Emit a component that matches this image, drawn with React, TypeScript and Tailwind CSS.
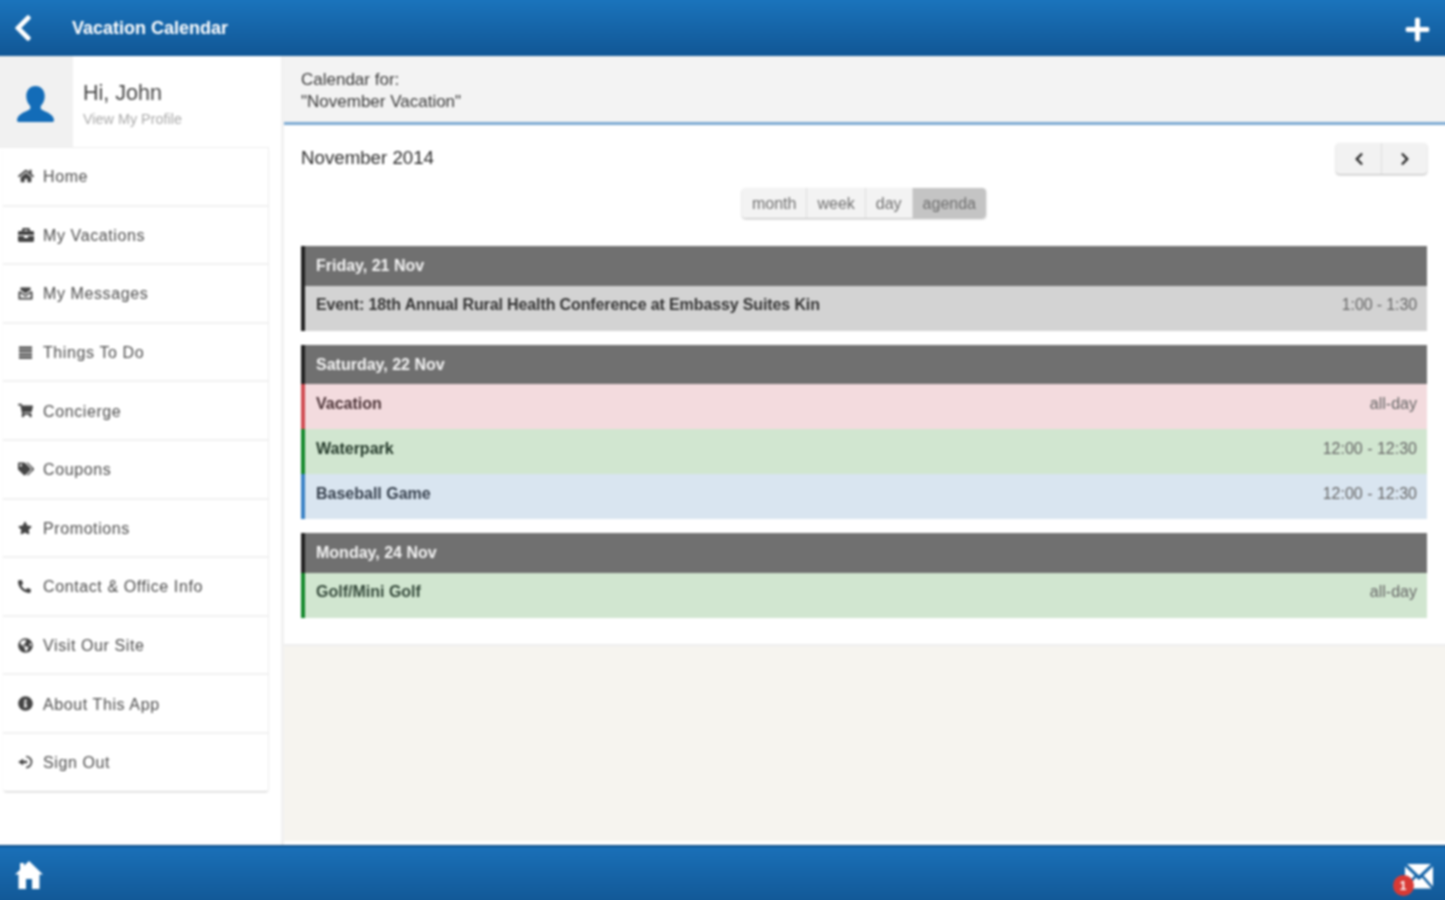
import type { ReactNode } from "react";
import { FaBriefcase, FaChevronLeft, FaChevronRight, FaGlobeAmericas, FaHome, FaInfoCircle, FaPhone, FaPlus, FaShoppingCart, FaStar, FaTags } from "react-icons/fa";

function ListIcon() {
  return (
    <svg viewBox="0 0 16 16" className="h-[15px] w-[15px] fill-[#444]">
      <path d="M1 1.500h14v2.400H1zM1 5.100h14v2.400H1zM1 8.700h14v2.400H1zM1 12.300h14v2.400H1z" />
    </svg>
  );
}

function InboxIcon() {
  return (
    <svg viewBox="0 0 16 16" className="h-[15px] w-[15px] fill-none stroke-[#444]">
      <path d="M1.500 6v7.500h13V6" strokeWidth="2" />
      <path d="M3 2h10v1.800L8 7.500 3 3.800z" fill="#444" strokeWidth="1" />
      <path d="M1.500 6 8 10.500 14.500 6" strokeWidth="1.600" />
    </svg>
  );
}

function SignOutIcon() {
  return (
    <svg viewBox="0 0 16 16" className="h-[16px] w-[16px] fill-[#444] stroke-[#444]">
      <path d="M8 2.500a5.500 5.500 0 1 1 0 11" fill="none" strokeWidth="1.700" />
      <path d="M0.500 8 5 5v2h4v2H5v2z" strokeWidth="0.400" />
    </svg>
  );
}

function PersonIcon() {
  return (
    <svg viewBox="0 0 38 38" className="h-[37px] w-[37px] fill-[#136cb8]">
      <path d="M19 0c6 0 9.500 4.500 9.500 10.500 0 4.200-2 8-4.100 10v3.200c2.500 2.400 13.200 4.300 13.600 11.300 0 1.200-.6 2-1.600 2H1.600C.6 37 0 36.200 0 35c.4-7 11.100-8.900 13.600-11.300v-3.200c-2.100-2-4.100-5.800-4.100-10C9.500 4.500 13 0 19 0z" />
    </svg>
  );
}

function HouseIcon() {
  return (
    <svg viewBox="0 0 28 28" className="h-[28px] w-[28px] fill-white">
      <path d="M14 0 28 13.500h-3.500V28H17V18h-6v10H3.500V13.500H0L5 8.700V2h4v2.800z" />
    </svg>
  );
}

function MailIcon() {
  return (
    <svg viewBox="0 0 28 26" className="h-[26px] w-[28px]">
      <path d="M2 1h24L14 12.500z" fill="#fff" />
      <path d="M0 3.500v20l9.500-11zM28 3.500v20l-9.500-11z" fill="#fff" />
      <path d="M1.500 25.500 11 14.500l3 2.500 3-2.500 9.500 11z" fill="#fff" />
    </svg>
  );
}

const menu: { label: string; icon: ReactNode }[] = [
  { label: "Home", icon: <FaHome size={16} /> },
  { label: "My Vacations", icon: <FaBriefcase size={16} /> },
  { label: "My Messages", icon: <InboxIcon /> },
  { label: "Things To Do", icon: <ListIcon /> },
  { label: "Concierge", icon: <FaShoppingCart size={15} /> },
  { label: "Coupons", icon: <FaTags size={16} /> },
  { label: "Promotions", icon: <FaStar size={14} /> },
  { label: "Contact & Office Info", icon: <FaPhone size={13} className="-scale-x-100" /> },
  { label: "Visit Our Site", icon: <FaGlobeAmericas size={15} /> },
  { label: "About This App", icon: <FaInfoCircle size={15} /> },
  { label: "Sign Out", icon: <SignOutIcon /> },
];

const agenda = [
  {
    day: "Friday, 21 Nov",
    events: [{ title: "Event: 18th Annual Rural Health Conference at Embassy Suites Kin", time: "1:00 - 1:30", bg: "bg-[#d3d3d3]", edge: "border-l-[#222222]", text: "text-[#333333] tracking-[-0.12px]" }],
  },
  {
    day: "Saturday, 22 Nov",
    events: [
      { title: "Vacation", time: "all-day", bg: "bg-[#f3dbde]", edge: "border-l-[#cf4a50]", text: "text-[#4a3236]" },
      { title: "Waterpark", time: "12:00 - 12:30", bg: "bg-[#d1e6d0]", edge: "border-l-[#13882b]", text: "text-[#24392a]" },
      { title: "Baseball Game", time: "12:00 - 12:30", bg: "bg-[#d9e5f0]", edge: "border-l-[#3b82c4]", text: "text-[#333d4a]" },
    ],
  },
  {
    day: "Monday, 24 Nov",
    events: [{ title: "Golf/Mini Golf", time: "all-day", bg: "bg-[#d1e6d0]", edge: "border-l-[#13882b]", text: "text-[#34483a]" }],
  },
];

const views = ["month", "week", "day", "agenda"];

export default function App() {
  return (
    <div className="h-[900px] w-[1445px] overflow-hidden">
      {/* 3px bleed on every side so the soft filter does not fade at the window edge */}
      <div className="-m-[3px] flex h-[906px] w-[1451px] flex-col bg-white font-['Liberation_Sans',Arial,sans-serif] text-[#333] blur-[0.8px]">
        <header className="flex h-[59px] shrink-0 items-center justify-between bg-gradient-to-b from-[#1b75be] to-[#115795] pl-[11px] pr-[17px] pt-[3px] shadow-[0_1px_1px_rgba(0,0,0,0.3)]">
          <div className="flex items-center">
            <FaChevronLeft size={30} className="text-white" />
            <h1 className="ml-[34px] text-[18px] font-bold text-white">Vacation Calendar</h1>
          </div>
          <FaPlus size={27} className="mt-[3px] text-white" />
        </header>

        <div className="flex min-h-0 flex-1">
          <aside className="w-[287px] shrink-0 border-r-[3px] border-r-[#f1f1f1] bg-white pr-[12px] pl-[6px]">
            <div className="-ml-[6px] flex h-[92px] border-b border-b-[#eeeeee]">
              <div className="flex w-[76px] items-center justify-center bg-[#f1f1f1] pl-[1px] pt-[5px]">
                <PersonIcon />
              </div>
              <div className="pl-[10px] pt-[24.500px]">
                <div className="text-[21.500px] leading-[25px] text-[#444]">Hi, John</div>
                <div className="mt-[5.500px] text-[14.400px] leading-[16px] text-[#aaaaaa]">View My Profile</div>
              </div>
            </div>
            <nav className="rounded-b-[3px] border-r border-r-[#eeeeee] shadow-[0_2px_2px_-1px_rgba(0,0,0,0.22)]">
              {menu.map((item) => (
                <div key={item.label} className="flex h-[58.600px] items-center border-b-2 border-b-[#f1f1f1] pl-[15px] pt-[2px] last:h-[57px] last:border-b-0">
                  <span className="-mt-[2px] flex w-[25px] shrink-0 items-center text-[#444]">{item.icon}</span>
                  <span className="text-[16px] tracking-[0.6px] text-[#4d4d4d]">{item.label}</span>
                </div>
              ))}
            </nav>
          </aside>

          <main className="flex min-w-0 flex-1 flex-col border-b-[4px] border-b-white bg-[#f6f4ef]">
            <div className="h-[69px] shrink-0 border-b-[3px] border-b-[#7eabd3] bg-[#f3f3f3] pl-[17px] pt-[13px] text-[17px] leading-[22px] text-[#3a3a3a]">
              <div>Calendar for:</div>
              <div>"November Vacation"</div>
            </div>

            <section className="h-[521px] shrink-0 border-b-2 border-b-[#eeeeee] bg-white pl-[17px] pr-[21px] pt-[21px]">
              <div className="flex items-start justify-between">
                <h2 className="text-[18.700px] leading-[24px] text-[#2b2b2b]">November 2014</h2>
                <div className="mt-[-3px] flex h-[31px] w-[91px] rounded-[4px] bg-[#f2f2f2] shadow-[0_1px_2px_rgba(0,0,0,0.3)]">
                  <button className="flex flex-1 items-center justify-center border-r border-r-[#dddddd] text-[#222]">
                    <FaChevronLeft size={14} />
                  </button>
                  <button className="flex flex-1 items-center justify-center text-[#222]">
                    <FaChevronRight size={14} />
                  </button>
                </div>
              </div>

              <div className="mt-[14px] flex justify-center">
                <div className="flex h-[30px] overflow-hidden rounded-[4px] pt-0 shadow-[0_1px_2px_rgba(0,0,0,0.3)]">
                  {views.map((view) => (
                    <button
                      key={view}
                      className={view === "agenda" ? "border-r border-r-[#dddddd] bg-[#c4c4c4] px-[10px] pt-[2px] text-[16px] text-[#6f6f6f] last:border-r-0" : "border-r border-r-[#dddddd] bg-[#f3f3f3] px-[10px] pt-[2px] text-[16px] text-[#6f6f6f] last:border-r-0"}
                    >
                      {view}
                    </button>
                  ))}
                </div>
              </div>

              <div className="mt-[28px] flex flex-col gap-[14px]">
                {agenda.map((group) => (
                  <div key={group.day}>
                    <div className="flex h-[39.500px] items-center border-l-4 border-l-[#222222] bg-[#707070] pl-[11px] pt-[1px] text-[16px] font-bold text-[#f4f4f4]">
                      {group.day}
                    </div>
                    {group.events.map((event) => (
                      <div key={event.title} className={`flex h-[45px] items-center justify-between border-l-4 pb-[6px] pl-[11px] pr-[10px] text-[16px] ${event.bg} ${event.edge} ${event.text}`}>
                        <span className="font-bold">{event.title}</span>
                        <span className="text-[#666]">{event.time}</span>
                      </div>
                    ))}
                  </div>
                ))}
              </div>
            </section>
          </main>
        </div>

        <footer className="flex h-[58px] shrink-0 items-center justify-between border-t-2 border-t-[#0d4f8b] bg-gradient-to-b from-[#1a70b8] to-[#125896] pb-[3px] pl-[18px] pr-[15px]">
          <div className="mt-[3px]">
            <HouseIcon />
          </div>
          <div className="relative mt-[4px]">
            <MailIcon />
            <span className="absolute -left-[12.500px] top-[12.500px] flex h-[21px] w-[21px] items-center justify-center rounded-full bg-[#d83a35] text-[12px] font-bold text-white">1</span>
          </div>
        </footer>
      </div>
    </div>
  );
}
